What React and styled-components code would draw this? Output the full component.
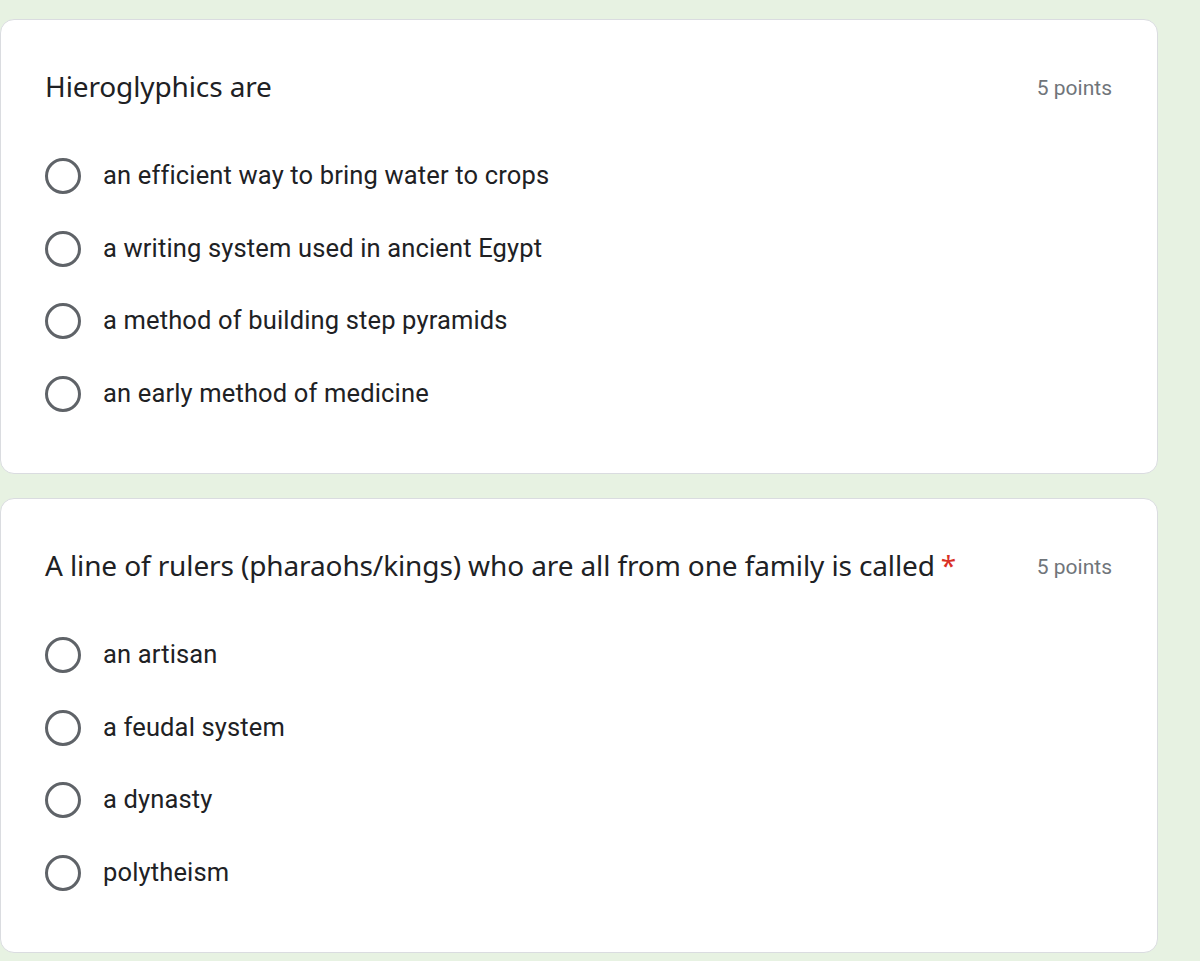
import React from "react";
import styled, { createGlobalStyle } from "styled-components";

const Global = createGlobalStyle`
  html, body { margin: 0; padding: 0; background: #e7f2e2; }
  body { font-family: Roboto, "Liberation Sans", sans-serif; }
`;

const Page = styled.div`
  width: 1158px;
  padding: 19px 0 20px 0;
  display: flex;
  flex-direction: column;
  gap: 24px;
`;

const Card = styled.section`
  box-sizing: border-box;
  height: 455px;
  background: #fff;
  border: 1.5px solid #dadce0;
  border-radius: 14px;
  padding: 45px 45px 44px 44px;
  display: flex;
  flex-direction: column;
`;

const Header = styled.div`
  display: flex;
  align-items: center;
  justify-content: space-between;
  height: 42px;
`;

const Title = styled.h2`
  margin: 0;
  font-family: "Noto Sans", Roboto, sans-serif;
  font-weight: 400;
  font-size: 28px;
  line-height: 42px;
  color: #202124;
  letter-spacing: -0.12px;
`;

const Star = styled.span`
  color: #d93025;
  margin-left: 6px;
`;

const Points = styled.span`
  font-size: 21px;
  color: #70757a;
  white-space: nowrap;
  margin-top: 3px;
`;

const Options = styled.div`
  margin-top: 33px;
  display: flex;
  flex-direction: column;
`;

const Option = styled.label`
  display: flex;
  align-items: center;
  height: 72.5px;
  gap: 22px;
  cursor: pointer;
`;

const Radio = styled.span`
  box-sizing: border-box;
  width: 36px;
  height: 36px;
  border-radius: 50%;
  border: 3.5px solid #5f6368;
  flex: none;
`;

const OptionText = styled.span`
  font-size: 25.5px;
  color: #202124;
  letter-spacing: 0.15px;
  margin-top: -2px;
`;

const questions = [
  {
    title: "Hieroglyphics are",
    required: false,
    options: [
      "an efficient way to bring water to crops",
      "a writing system used in ancient Egypt",
      "a method of building step pyramids",
      "an early method of medicine",
    ],
  },
  {
    title: "A line of rulers (pharaohs/kings) who are all from one family is called",
    required: true,
    options: ["an artisan", "a feudal system", "a dynasty", "polytheism"],
  },
];

export default function App() {
  return (
    <>
      <Global />
      <Page>
        {questions.map((q) => (
          <Card key={q.title}>
            <Header>
              <Title>
                {q.title}
                {q.required && <Star>*</Star>}
              </Title>
              <Points>5 points</Points>
            </Header>
            <Options>
              {q.options.map((o) => (
                <Option key={o}>
                  <Radio />
                  <OptionText>{o}</OptionText>
                </Option>
              ))}
            </Options>
          </Card>
        ))}
      </Page>
    </>
  );
}
